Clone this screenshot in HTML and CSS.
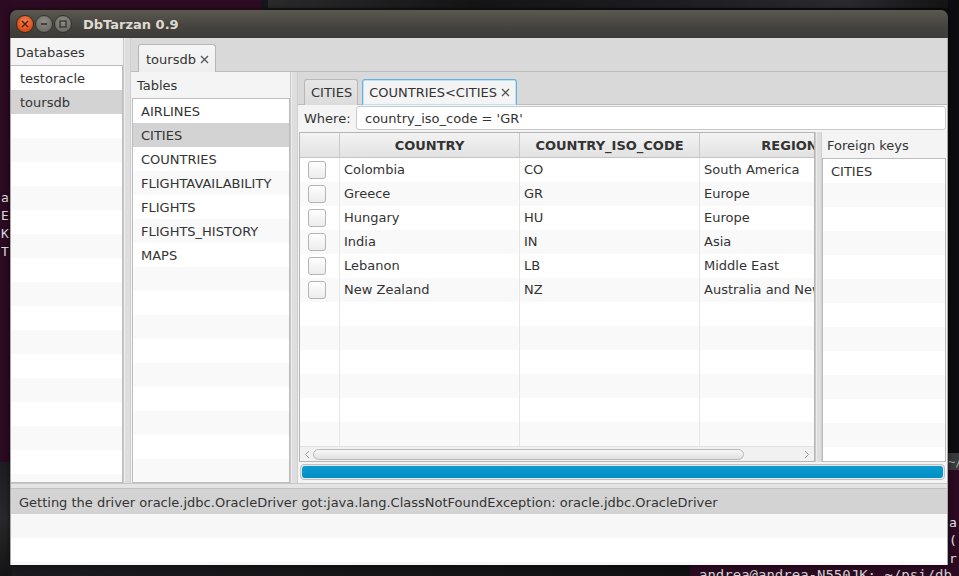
FILE: index.html
```html
<!DOCTYPE html>
<html>
<head>
<meta charset="utf-8">
<title>DbTarzan 0.9</title>
<link rel="stylesheet" href="styles.css">
</head>
<body>
<div class="desktop">
  <div class="bg-top-left"></div>
  <div class="bg-top-smudge"></div>
  <div class="bg-left-term"><span>a</span><span>E</span><span>K</span><span>T</span></div>
  <div class="bg-left-low"></div>
  <div class="bg-right-gray">~/</div>
  <div class="bg-right-term"><span>a</span><span>(</span><span>r</span></div>
  <div class="bg-bottom-term">andrea@andrea-N550JK: ~/psi/db</div>

  <div class="window">
    <div class="titlebar">
      <span class="wbtn close"><svg width="8" height="8" viewBox="0 0 8 8"><path d="M1 1L7 7M7 1L1 7" stroke="#4a1d0c" stroke-width="1.4"/></svg></span>
      <span class="wbtn gray"><svg width="8" height="8" viewBox="0 0 8 8"><path d="M1 4H7" stroke="#2e2d29" stroke-width="1.4"/></svg></span>
      <span class="wbtn gray"><svg width="8" height="8" viewBox="0 0 8 8"><rect x="1" y="1" width="6" height="6" fill="none" stroke="#2e2d29" stroke-width="1.2"/></svg></span>
      <span class="wtitle">DbTarzan 0.9</span>
    </div>

    <div class="content">
      <div class="main">
        <div class="pane db-pane">
          <div class="pane-label">Databases</div>
          <div class="list">
            <div class="row">testoracle</div>
            <div class="row sel">toursdb</div>
            <div class="row"></div><div class="row"></div><div class="row"></div><div class="row"></div>
            <div class="row"></div><div class="row"></div><div class="row"></div><div class="row"></div>
            <div class="row"></div><div class="row"></div><div class="row"></div><div class="row"></div>
            <div class="row"></div><div class="row"></div><div class="row"></div><div class="row"></div>
          </div>
        </div>
        <div class="vdivider"></div>
        <div class="tabpane outer">
          <div class="tabheader outer-header">
            <div class="tab selected-outer">toursdb<svg class="x" width="9" height="9" viewBox="0 0 9 9"><path d="M1 1L8 8M8 1L1 8" stroke="#555" stroke-width="1.3"/></svg></div>
          </div>
          <div class="tabcontent">
            <div class="pane tables-pane">
              <div class="pane-label">Tables</div>
              <div class="list">
                <div class="row">AIRLINES</div>
                <div class="row sel">CITIES</div>
                <div class="row">COUNTRIES</div>
                <div class="row">FLIGHTAVAILABILITY</div>
                <div class="row">FLIGHTS</div>
                <div class="row">FLIGHTS_HISTORY</div>
                <div class="row">MAPS</div>
                <div class="row"></div><div class="row"></div><div class="row"></div><div class="row"></div>
                <div class="row"></div><div class="row"></div><div class="row"></div><div class="row"></div>
                <div class="row"></div>
              </div>
            </div>
            <div class="vdivider"></div>
            <div class="right-pane">
              <div class="tabheader inner-header">
                <div class="tab small">CITIES</div>
                <div class="tab small active">COUNTRIES&lt;CITIES<svg class="x" width="9" height="9" viewBox="0 0 9 9"><path d="M1 1L8 8M8 1L1 8" stroke="#555" stroke-width="1.3"/></svg></div>
              </div>
              <div class="where">
                <span class="where-label">Where:</span>
                <div class="where-input">country_iso_code = 'GR'</div>
              </div>
              <div class="data-split">
                <div class="table">
                  <div class="thead">
                    <div class="c c0"></div>
                    <div class="c c1">COUNTRY</div>
                    <div class="c c2">COUNTRY_ISO_CODE</div>
                    <div class="c c3">REGION</div>
                  </div>
                  <div class="tbody">
                    <div class="tr"><div class="c c0"><span class="cb"></span></div><div class="c c1">Colombia</div><div class="c c2">CO</div><div class="c c3">South America</div></div>
                    <div class="tr"><div class="c c0"><span class="cb"></span></div><div class="c c1">Greece</div><div class="c c2">GR</div><div class="c c3">Europe</div></div>
                    <div class="tr"><div class="c c0"><span class="cb"></span></div><div class="c c1">Hungary</div><div class="c c2">HU</div><div class="c c3">Europe</div></div>
                    <div class="tr"><div class="c c0"><span class="cb"></span></div><div class="c c1">India</div><div class="c c2">IN</div><div class="c c3">Asia</div></div>
                    <div class="tr"><div class="c c0"><span class="cb"></span></div><div class="c c1">Lebanon</div><div class="c c2">LB</div><div class="c c3">Middle East</div></div>
                    <div class="tr"><div class="c c0"><span class="cb"></span></div><div class="c c1">New Zealand</div><div class="c c2">NZ</div><div class="c c3">Australia and New Zealand</div></div>
                    <div class="tr"><div class="c c0"></div><div class="c c1"></div><div class="c c2"></div><div class="c c3"></div></div>
                    <div class="tr"><div class="c c0"></div><div class="c c1"></div><div class="c c2"></div><div class="c c3"></div></div>
                    <div class="tr"><div class="c c0"></div><div class="c c1"></div><div class="c c2"></div><div class="c c3"></div></div>
                    <div class="tr"><div class="c c0"></div><div class="c c1"></div><div class="c c2"></div><div class="c c3"></div></div>
                    <div class="tr"><div class="c c0"></div><div class="c c1"></div><div class="c c2"></div><div class="c c3"></div></div>
                    <div class="tr"><div class="c c0"></div><div class="c c1"></div><div class="c c2"></div><div class="c c3"></div></div>
                    <div class="tr"><div class="c c0"></div><div class="c c1"></div><div class="c c2"></div><div class="c c3"></div></div>
                  </div>
                  <div class="hscroll">
                    <svg class="arrow" width="6" height="9" viewBox="0 0 6 9"><path d="M5 1L1.5 4.5L5 8" fill="none" stroke="#9a9a9a" stroke-width="1"/></svg>
                    <div class="track"><div class="thumb"></div></div>
                    <svg class="arrow" width="6" height="9" viewBox="0 0 6 9"><path d="M1 1L4.5 4.5L1 8" fill="none" stroke="#9a9a9a" stroke-width="1"/></svg>
                  </div>
                </div>
                <div class="vdivider thin"></div>
                <div class="pane fk-pane">
                  <div class="pane-label">Foreign keys</div>
                  <div class="list">
                    <div class="row">CITIES</div>
                    <div class="row"></div><div class="row"></div><div class="row"></div><div class="row"></div>
                    <div class="row"></div><div class="row"></div><div class="row"></div><div class="row"></div>
                    <div class="row"></div><div class="row"></div><div class="row"></div><div class="row"></div>
                  </div>
                </div>
              </div>
              <div class="progress-row"><div class="progress"><div class="bar"></div></div></div>
            </div>
          </div>
        </div>
      </div>
      <div class="hdivider"></div>
      <div class="list status">
        <div class="row sel">Getting the driver oracle.jdbc.OracleDriver got:java.lang.ClassNotFoundException: oracle.jdbc.OracleDriver</div>
        <div class="row"></div>
        <div class="row"></div>
        <div class="row"></div>
      </div>
    </div>
  </div>
</div>
</body>
</html>
```

FILE: styles.css
```css
* { box-sizing: border-box; }
html, body { margin: 0; padding: 0; }
body {
  width: 959px; height: 576px; overflow: hidden;
  background: #121214;
  font-family: "DejaVu Sans", "Liberation Sans", sans-serif;
  font-size: 13px; color: #333;
}
.desktop { position: relative; width: 959px; height: 576px; overflow: hidden;
  background: linear-gradient(90deg, #1b1a1e 0%, #121215 60%, #0c0c10 100%); }

.bg-top-left { position: absolute; left: 0; top: 0; width: 262px; height: 12px; background: #2d0c23; }
.bg-top-smudge { position: absolute; left: 268px; top: 0; width: 680px; height: 8px;
  background: linear-gradient(90deg, #2a2a2c, #151517 30%, #1e1e22 60%, #2b2b2f 85%, #141416); }
.bg-left-term { position: absolute; left: 0; top: 0; width: 12px; height: 462px; background: #2c0a21;
  color: #ddd; font-family: "DejaVu Sans Mono", monospace; font-size: 13px;
  display: flex; flex-direction: column; padding-top: 189px; padding-left: 1px; line-height: 18px; }
.bg-left-low { position: absolute; left: 0; top: 462px; width: 12px; height: 114px; background: linear-gradient(#1d1c20, #29282c 50%, #141417); }
.bg-right-gray { position: absolute; left: 946px; top: 453px; width: 13px; height: 17px; background: #3a3a3c;
  color: #aaa; font-family: "DejaVu Sans Mono", monospace; font-size: 12px; line-height: 19px; padding-left: 2px; }
.bg-right-term { position: absolute; left: 946px; top: 470px; width: 13px; height: 106px; background: #2c0a21;
  color: #e6e6e6; font-family: "DejaVu Sans Mono", monospace; font-size: 13px; line-height: 18px;
  display: flex; flex-direction: column; padding-top: 44px; padding-left: 3px; }
.bg-bottom-term { position: absolute; left: 690px; top: 565px; width: 269px; height: 11px; background: #2c0a21;
  color: #cfcfcf; font-family: "DejaVu Sans Mono", monospace; font-size: 14px; line-height: 20px;
  padding-left: 9px; white-space: nowrap; overflow: hidden; }

.window { position: absolute; left: 10px; top: 10px; width: 938px; height: 555px;
  display: flex; flex-direction: column; border-radius: 7px 7px 0 0; overflow: hidden;
  box-shadow: 0 0 6px rgba(0,0,0,0.6); }
.titlebar { height: 28px; flex: none; display: flex; align-items: center; padding-left: 6px;
  background: linear-gradient(#5b5850, #45433e 60%, #3c3b37); }
.wbtn { width: 18px; height: 18px; border-radius: 50%; margin-right: 1px; display: flex;
  align-items: center; justify-content: center; }
.wbtn.close { background: radial-gradient(circle at 50% 35%, #f58456, #e0521f 60%, #c8431a); border: 1px solid #3a2b22; }
.wbtn.gray { background: radial-gradient(circle at 50% 35%, #8e8c85, #6f6d66 70%, #5e5c56); border: 1px solid #34332f; }
.wtitle { margin-left: 10px; color: #dfdbd2; font-weight: bold; font-size: 13px; }

.content { flex: 1; display: flex; flex-direction: column; background: #dcdcdc;
  border-left: 1px solid #a9a9a9; border-right: 1px solid #a9a9a9; }
.main { height: 445px; flex: none; display: flex; }

.pane { display: flex; flex-direction: column; background: #f4f4f4; }
.pane-label { flex: none; height: 27px; line-height: 29px; padding-left: 5px; color: #333; }
.list { flex: 1; border: 1px solid #bdbdbd; background: #fff; overflow: hidden; }
.row { height: 24px; line-height: 26px; padding-left: 8px; white-space: nowrap; overflow: hidden; background: #fff; }
.row:nth-child(even) { background: #f9f9f9; }
.row.sel { background: #d3d3d3; }

.db-pane { width: 112px; flex: none; }
.db-pane .list { border-left: none; }
.db-pane .row { padding-left: 9px; }

.vdivider { width: 8px; flex: none; background: #dedede;
  border-left: 1px solid #c9c9c9; border-right: 1px solid #cfcfcf;
  box-shadow: inset 1px 0 0 #ececec; }
.vdivider.thin { width: 7px; }

.tabpane { flex: 1; display: flex; flex-direction: column; min-width: 0; }
.tabheader { flex: none; display: flex; align-items: flex-end; background: #d9d9d9;
  border-bottom: 1px solid #bcbcbc; }
.outer-header { height: 34px; padding-left: 7px; }
.tab { height: 27px; display: flex; align-items: center; padding: 1px 6px 0 7px;
  background: linear-gradient(#f6f6f6, #ececec); border: 1px solid #b6b6b6; border-bottom: none;
  border-radius: 3px 3px 0 0; margin-bottom: -1px; }
.tab .x { margin-left: 4px; }
.selected-outer { width: 78px; background: linear-gradient(#f5f5f5, #efefef); height: 28px; }

.tabcontent { flex: 1; display: flex; background: #f4f4f4; min-height: 0; }
.tables-pane { width: 159px; flex: none; padding-left: 1px; }
.tables-pane .pane-label { height: 26px; line-height: 27px; }

.right-pane { flex: 1; display: flex; flex-direction: column; min-width: 0; background: #f4f4f4; }
.inner-header { height: 33px; padding-left: 6px; }
.tab.small { height: 26px; margin-right: 4px; padding: 0 5px 0 6px; background: linear-gradient(#e6e6e6, #dcdcdc); border-color: #b8b8b8; }
.tab.small.active { background: #f4f4f4; border: 1px solid #5db6e2; border-bottom: none; box-shadow: inset 0 0 0 1px #bfe2f3; padding-right: 6px; }

.where { flex: none; height: 26px; display: flex; align-items: center; padding: 0 1px 0 6px; }
.where-label { width: 52px; padding-top: 1px; }
.where-input { flex: 1; height: 24px; line-height: 24px; background: #fff; border: 1px solid #c9c9c9;
  border-radius: 3px; padding-left: 8px; }

.data-split { flex: 1; display: flex; min-height: 0; padding: 1px 1px 0 1px; }
.table { width: 516px; flex: none; display: flex; flex-direction: column; border: 1px solid #b5b5b5;
  background: #fff; overflow: hidden; }
.thead { flex: none; height: 25px; display: flex; background: linear-gradient(#f3f3f3, #e2e2e2);
  border-bottom: 1px solid #c4c4c4; }
.thead .c { font-weight: bold; text-align: center; line-height: 26px; border-right: 1px solid #cacaca; padding: 0; }
.tbody { flex: 1; overflow: hidden; }
.tr { display: flex; height: 24px; background: #fff; }
.tr:nth-child(even) { background: #f9f9f9; }
.c { flex: none; height: 100%; line-height: 24px; padding-left: 4px; white-space: nowrap; overflow: hidden;
  border-right: 1px solid #e6e6e6; }
.c0 { width: 40px; display: flex; align-items: center; justify-content: flex-start; padding: 0 0 0 8px; }
.c1, .c2 { width: 180px; }
.c3 { width: 180px; border-right: none; }
.cb { width: 18px; height: 18px; border: 1px solid #b4b4b4; border-radius: 3px;
  background: linear-gradient(#ffffff, #ececec); }

.hscroll { flex: none; height: 15px; display: flex; align-items: center; background: #f1f1f1;
  border-top: 1px solid #e2e2e2; padding: 0 4px; }
.hscroll .arrow { flex: none; }
.track { flex: 1; height: 13px; display: flex; align-items: center; padding: 0 3px; }
.thumb { width: 431px; height: 11px; border-radius: 6px; border: 1px solid #b9b9b9;
  background: linear-gradient(#f8f8f8, #e0e0e0); }

.fk-pane { flex: 1; min-width: 0; }
.fk-pane .pane-label { height: 26px; line-height: 27px; }

.progress-row { flex: none; height: 21px; padding: 2px 2px 3px 2px; }
.progress { height: 16px; border: 1px solid #c0c0c0; border-radius: 4px; background: #e8e8e8; padding: 1px; }
.bar { height: 100%; border-radius: 3px; background: linear-gradient(#0a9ad0, #0090c4); }

.hdivider { flex: none; height: 5px; background: #e4e4e4; border-top: 1px solid #c6c6c6; }
.list.status { flex: 1; border: none; border-top: 1px solid #c2c2c2; }
.status .row { padding-left: 8px; }
.status .row.sel { height: 25px; line-height: 27px; background: #d3d3d3; }
.status .row:nth-child(2) { background: #f7f7f7; }
.status .row:nth-child(3) { background: #fff; }
.status .row:nth-child(4) { background: #f7f7f7; }
```
